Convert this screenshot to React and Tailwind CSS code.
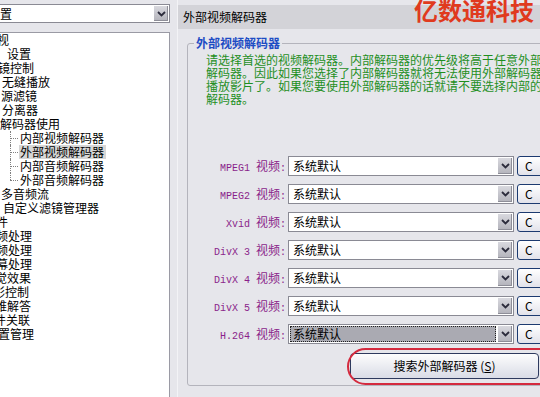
import React from "react";

const cjk = "font-['Noto_Sans_CJK_SC',sans-serif]";
const mono = "font-['Liberation_Mono',monospace]";

const tree = [
  { t: "视", x: -3 },
  { t: "设置", x: 7 },
  { t: "镜控制", x: -2 },
  { t: "无缝播放", x: 2 },
  { t: "源滤镜", x: 1 },
  { t: "分离器", x: 2 },
  { t: "解码器使用", x: 0 },
  { t: "内部视频解码器", child: true },
  { t: "外部视频解码器", child: true, selected: true },
  { t: "内部音频解码器", child: true },
  { t: "外部音频解码器", child: true, last: true },
  { t: "多音频流", x: 1 },
  { t: "自定义滤镜管理器", x: 3 },
  { t: "件", x: -4 },
  { t: "频处理", x: -4 },
  { t: "频处理", x: -4 },
  { t: "幕处理", x: -4 },
  { t: "觉效果", x: -5 },
  { t: "彩控制", x: -7 },
  { t: "难解答", x: -5 },
  { t: "件关联", x: -6 },
  { t: "置管理", x: -2 },
];

const rows = [
  { a: "MPEG1" },
  { a: "MPEG2" },
  { a: "Xvid" },
  { a: "DivX 3" },
  { a: "DivX 4" },
  { a: "DivX 5" },
  { a: "H.264", selected: true },
];

function Chevron() {
  return (
    <svg width="9" height="6" viewBox="0 0 9 6">
      <path d="M1 1 L4.5 4.5 L8 1" fill="none" stroke="#2c2c3c" strokeWidth="1.8" />
    </svg>
  );
}

function DropButton() {
  return (
    <div className="w-[16px] h-full flex items-center justify-center border border-white bg-gradient-to-b from-[#d9d9df] to-[#b3b3bb] shadow-[inset_-1px_-1px_0_#8e8e98]">
      <Chevron />
    </div>
  );
}

function Combo({ selected }) {
  return (
    <div className="flex h-[20px] w-[226px] border border-[#8a8a94] bg-white">
      <div className="flex-1 p-[1px]">
        <div
          className={
            selected
              ? "h-full bg-[#aaaab2] border border-dotted border-[#202020] leading-[14px] pl-[2px]"
              : "h-full leading-[16px] pl-[3px]"
          }
        >
          系统默认
        </div>
      </div>
      <DropButton />
    </div>
  );
}

export default function App() {
  return (
    <div className={`relative w-[540px] h-[397px] overflow-hidden bg-[#e6e6eb] flex text-[12px] text-black ${cjk}`}>
      {/* left column */}
      <div className="w-[170px] flex flex-col shrink-0">
        <div className="mt-[4px] h-[19px] flex bg-white border-y border-r border-[#8a8a94]">
          <div className="flex-1 leading-[17px]">置</div>
          <DropButton />
        </div>
        <div className="mt-[9px] flex-1 bg-white border-t border-r border-[#9a9aa4] overflow-hidden">
          {tree.map((it, i) =>
            it.child ? (
              <div key={i} className="flex h-[14px]">
                <div className="relative w-[19px] h-full shrink-0">
                  <div
                    className={`absolute left-[10px] top-0 border-l border-dotted border-[#808080] ${
                      it.last ? "h-[7px]" : "h-[14px]"
                    }`}
                  />
                  <div className="absolute left-[10px] top-[7px] w-[8px] border-t border-dotted border-[#808080]" />
                </div>
                <div className={`leading-[14px] pl-[1px] pr-[2px] ${it.selected ? "bg-[#d6d6d6]" : ""}`}>
                  {it.t}
                </div>
              </div>
            ) : (
              <div key={i} className="h-[14px] leading-[14px] whitespace-nowrap" style={{ marginLeft: it.x }}>
                {it.t}
              </div>
            )
          )}
        </div>
      </div>

      {/* right column */}
      <div className="ml-[7px] flex-1 min-w-0 overflow-hidden border-l border-[#f3f3f6] flex flex-col">
        <div className="mt-[5px] h-[24px] bg-[#d3d3d8] pl-[5px] leading-[24px] whitespace-nowrap">外部视频解码器</div>
        <fieldset className="mt-[7px] ml-[9px] w-[390px] shrink-0 border border-[#b4b4bc] rounded-[3px]">
          <legend className="ml-[6px] px-[2px] font-bold text-[#1d4cc4] leading-[14px]">外部视频解码器</legend>
          <div className="pl-[18px] pt-[3px] text-[#1f8f1f] leading-[13px] whitespace-nowrap">
            <div>请选择首选的视频解码器。内部解码器的优先级将高于任意外部</div>
            <div>解码器。因此如果您选择了内部解码器就将无法使用外部解码器</div>
            <div>播放影片了。如果您要使用外部解码器的话就请不要选择内部的</div>
            <div>解码器。</div>
          </div>
          <div className="mt-[51px] flex flex-col gap-[8px]">
            {rows.map((r, i) => (
              <div key={i} className="flex items-center h-[20px]">
                <div className="w-[100px] pr-[2px] text-right text-[#8a1f8a] whitespace-nowrap">
                  <span className={`${mono} text-[10px]`}>{r.a} </span>
                  <span>视频</span>
                  <span className={`${mono} text-[10px]`}>:</span>
                </div>
                <Combo selected={r.selected} />
                <div className="ml-[3px] w-[40px] h-[20px] rounded-[3px] border border-[#1c3a70] bg-gradient-to-b from-white to-[#e2e2ea] pl-[7px] leading-[18px]">
                  C
                </div>
              </div>
            ))}
          </div>
          <div className="mt-[9px] mb-[6px] ml-[162px] w-[189px] h-[26px] rounded-[4px] border border-[#2e3a5e] bg-gradient-to-b from-[#fdfdfd] to-[#d9dce6] flex items-center justify-center">
            搜索外部解码器 (<span className="underline">S</span>)
          </div>
        </fieldset>
      </div>

      {/* annotations */}
      <div className="absolute left-[347px] top-[348px] w-[215px] h-[37px] rounded-full border-[2.5px] border-[#d42a3e]" />
      <div className="absolute left-[414px] top-[-3px] text-[24px] font-bold text-[#e03a1e] leading-[26px] whitespace-nowrap">
        亿数通科技
      </div>
    </div>
  );
}
